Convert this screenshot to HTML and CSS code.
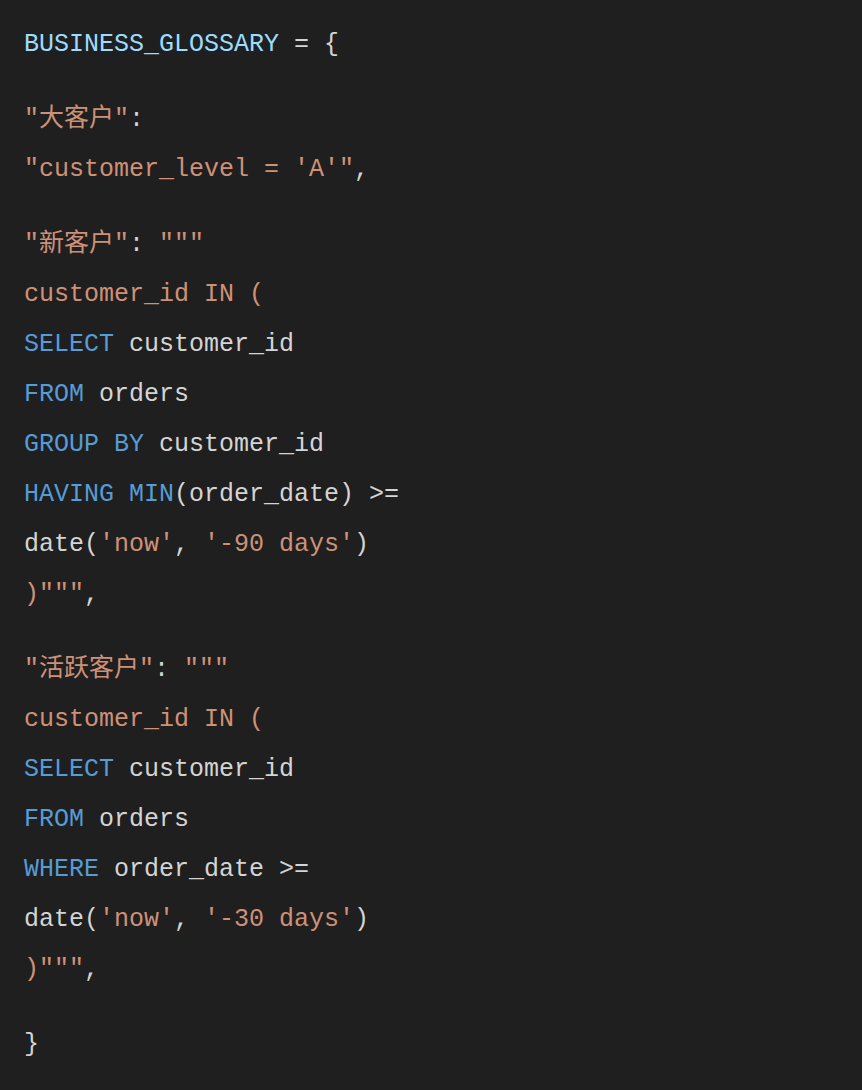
FILE: index.html
```html
<!DOCTYPE html>
<html lang="zh">
<head>
<meta charset="utf-8">
<title>Business Glossary</title>
<link rel="stylesheet" href="styles.css">
</head>
<body>
<div class="code">
  <div class="group">
    <div class="line"><span class="var">BUSINESS_GLOSSARY</span> = {</div>
  </div>
  <div class="group">
    <div class="line tall"><span class="str">"大客户"</span>:</div>
    <div class="line"><span class="str">"customer_level = 'A'"</span>,</div>
  </div>
  <div class="group">
    <div class="line tall"><span class="str">"新客户"</span>: <span class="str">"""</span></div>
    <div class="line"><span class="str">customer_id IN (</span></div>
    <div class="line"><span class="kw">SELECT</span> customer_id</div>
    <div class="line"><span class="kw">FROM</span> orders</div>
    <div class="line"><span class="kw">GROUP BY</span> customer_id</div>
    <div class="line"><span class="kw">HAVING MIN</span>(order_date) &gt;=</div>
    <div class="line">date(<span class="str">'now'</span>, <span class="str">'-90 days'</span>)</div>
    <div class="line"><span class="str">)"""</span>,</div>
  </div>
  <div class="group">
    <div class="line tall"><span class="str">"活跃客户"</span>: <span class="str">"""</span></div>
    <div class="line"><span class="str">customer_id IN (</span></div>
    <div class="line"><span class="kw">SELECT</span> customer_id</div>
    <div class="line"><span class="kw">FROM</span> orders</div>
    <div class="line"><span class="kw">WHERE</span> order_date &gt;=</div>
    <div class="line">date(<span class="str">'now'</span>, <span class="str">'-30 days'</span>)</div>
    <div class="line"><span class="str">)"""</span>,</div>
  </div>
  <div class="group last">
    <div class="line">}</div>
  </div>
</div>
</body>
</html>
```

FILE: styles.css
```css
html, body {
  margin: 0;
  padding: 0;
  background: #1f1f1f;
}
.code {
  padding: 20px 24px 0 24px;
  font-family: "Courier New", "Nimbus Mono PS", "FreeMono", "Liberation Mono", "Noto Sans CJK SC", monospace;
  font-size: 25px;
  color: #d4d4d4;
  display: flex;
  flex-direction: column;
  gap: 24px;
}
.line {
  height: 50px;
  line-height: 50px;
  white-space: pre;
}
.line.tall {
  height: 51px;
  line-height: 51px;
}
.group.last {
  margin-top: 1px;
}
.var { color: #9cdcfe; }
.str { color: #ce9178; }
.kw { color: #569cd6; }
```
